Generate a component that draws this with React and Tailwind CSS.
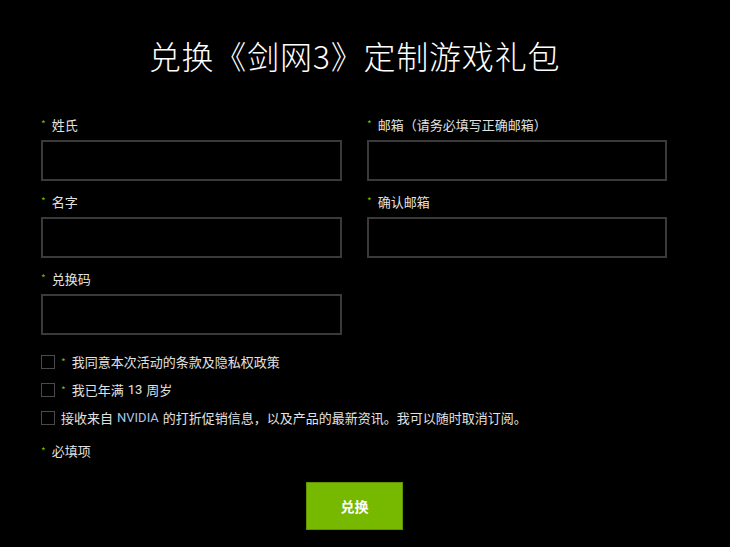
export default function App() {
  const font = { fontFamily: '"Noto Sans CJK SC", "Noto Sans", sans-serif' };
  const Star = () => <span className="text-[#76b900] text-[10px] mr-[6px] relative top-[-1px]">*</span>;
  const Field = ({ label }) => (
    <div className="flex flex-col">
      <div className="h-[18px] flex items-center text-[13px] text-[#e2e2e2] leading-[18px]"><Star />{label}</div>
      <div className="mt-[6px] h-[41px] border-2 border-[#3a3a3a] bg-black" />
    </div>
  );
  const Box = () => <span className="inline-block w-[14px] h-[14px] border border-[#4a4a4a] mr-[6px] shrink-0" />;
  return (
    <div className="w-[730px] h-[547px] bg-black text-[#e2e2e2] overflow-hidden" style={font}>
      <div className="w-[709px]">
        <h1 className="text-center text-white text-[32px] font-light pt-[32px] leading-[46px] tracking-[0.8px]">兑换《剑网3》定制游戏礼包</h1>
        <div className="px-[41px] pt-[38px]">
          <div className="grid grid-cols-[301px_300px] gap-x-[25px] gap-y-[12px]">
            <Field label="姓氏" />
            <Field label="邮箱（请务必填写正确邮箱）" />
            <Field label="名字" />
            <Field label="确认邮箱" />
            <Field label="兑换码" />
          </div>
          <div className="flex flex-col gap-[10px] mt-[18px] text-[13px]">
            <div className="flex items-center h-[18px]"><Box /><Star />我同意本次活动的条款及隐私权政策</div>
            <div className="flex items-center h-[18px]"><Box /><Star />我已年满<span className="mx-[4px]" style={{ fontFamily: 'Roboto, sans-serif' }}>13</span>周岁</div>
            <div className="flex items-center h-[18px]"><Box />接收来自<span className="mx-[4px] text-[#a9c7e8]" style={{ fontFamily: 'Roboto, sans-serif' }}>NVIDIA</span>的打折促销信息，以及产品的最新资讯。我可以随时取消订阅。</div>
          </div>
          <div className="mt-[15px] flex items-center h-[18px] text-[13px]"><Star />必填项</div>
          <div className="flex justify-center mt-[22px]">
            <button className="w-[97px] h-[48px] bg-[#76b900] text-white text-[14px] font-bold border border-[#5e9400]">兑换</button>
          </div>
        </div>
      </div>
    </div>
  );
}
